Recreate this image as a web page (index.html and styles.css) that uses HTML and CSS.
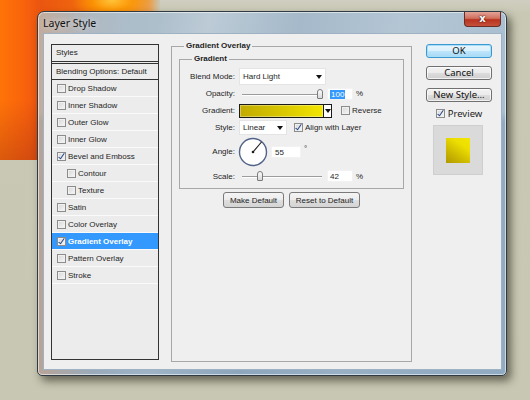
FILE: index.html
```html
<!DOCTYPE html>
<html>
<head>
	<meta charset="utf-8">
	<title>Layer Style</title>
	<link rel="stylesheet" href="styles.css">
</head>
<body>
	<div class="art"></div>

	<div class="window">
		<div class="titlebar">
			<span class="titlebar__text">Layer Style</span>
			<span class="titlebar__close">x</span>
		</div>

		<div class="client">
			<div class="styles">
				<div class="styles__head">Styles</div>
				<div class="styles__head styles__head--blend">Blending Options: Default</div>
				<div class="styles__item"><span class="cb"></span>Drop Shadow</div>
				<div class="styles__item"><span class="cb"></span>Inner Shadow</div>
				<div class="styles__item"><span class="cb"></span>Outer Glow</div>
				<div class="styles__item"><span class="cb"></span>Inner Glow</div>
				<div class="styles__item"><span class="cb cb--on"></span>Bevel and Emboss</div>
				<div class="styles__item styles__item--sub"><span class="cb"></span>Contour</div>
				<div class="styles__item styles__item--sub"><span class="cb"></span>Texture</div>
				<div class="styles__item"><span class="cb"></span>Satin</div>
				<div class="styles__item"><span class="cb"></span>Color Overlay</div>
				<div class="styles__item styles__item--active"><span class="cb cb--on"></span>Gradient Overlay</div>
				<div class="styles__item"><span class="cb"></span>Pattern Overlay</div>
				<div class="styles__item"><span class="cb"></span>Stroke</div>
			</div>

			<fieldset class="group">
				<legend>Gradient Overlay</legend>
				<fieldset class="group group--inner">
					<legend>Gradient</legend>

					<div class="row">
						<label class="row__label">Blend Mode:</label>
						<div class="select select--blend">Hard Light<span class="select__arrow"></span></div>
					</div>

					<div class="row">
						<label class="row__label">Opacity:</label>
						<div class="slider"><span class="slider__thumb" style="left: 75px"></span></div>
						<div class="field"><span class="field__sel">100</span></div>
						<span class="unit">%</span>
					</div>

					<div class="row">
						<label class="row__label">Gradient:</label>
						<div class="grad">
							<div class="grad__fill"></div>
							<div class="grad__arrow"><span class="select__arrow"></span></div>
						</div>
						<span class="cb cb--reverse"></span>
						<span class="check-text">Reverse</span>
					</div>

					<div class="row">
						<label class="row__label">Style:</label>
						<div class="select select--style">Linear<span class="select__arrow"></span></div>
						<span class="cb cb--on cb--align"></span>
						<span class="check-text">Align with Layer</span>
					</div>

					<div class="row row--angle">
						<label class="row__label">Angle:</label>
						<svg class="dial" width="30" height="30" viewBox="0 0 30 30">
							<circle cx="15" cy="15" r="13.5" fill="#fff" stroke="#52638a" stroke-width="1.4"/>
							<line x1="15" y1="15" x2="23.5" y2="5" stroke="#1c1c1c" stroke-width="1.1"/>
							<circle cx="15" cy="15" r="1.3" fill="#1c1c1c"/>
						</svg>
						<div class="field field--angle">55</div>
						<span class="unit unit--deg">°</span>
					</div>

					<div class="row row--scale">
						<label class="row__label">Scale:</label>
						<div class="slider"><span class="slider__thumb" style="left: 15px"></span></div>
						<div class="field">42</div>
						<span class="unit">%</span>
					</div>
				</fieldset>

				<div class="defaults">
					<button class="btn-small">Make Default</button>
					<button class="btn-small">Reset to Default</button>
				</div>
			</fieldset>

			<div class="actions">
				<button class="btn btn--default">OK</button>
				<button class="btn">Cancel</button>
				<button class="btn">New Style...</button>
				<div class="preview-check"><span class="cb cb--on"></span>Preview</div>
				<div class="preview">
					<div class="preview__swatch"></div>
				</div>
			</div>
		</div>
	</div>
</body>
</html>
```

FILE: styles.css
```css
body {
	margin: 0;
	width: 530px;
	height: 400px;
	overflow: hidden;
	position: relative;
	background: linear-gradient(180deg, #cfcec0 0, #c9c8b4 14px, #c8c7b3 100%);
	font-family: "Liberation Sans", Arial, sans-serif;
	font-size: 8px;
	color: #1e1e1e;
}

.art {
	position: absolute;
	left: 0;
	top: 0;
	width: 160px;
	height: 160px;
	background:
		radial-gradient(ellipse 40px 22px at 112px 0, #ffc53a 0, rgba(255, 160, 0, .7) 50%, rgba(255, 140, 0, 0) 100%),
		linear-gradient(180deg, rgba(0, 0, 0, 0) 100px, rgba(150, 40, 20, .35) 160px),
		linear-gradient(90deg, #ff7408 0, #f8620c 25px, #ea5510 40px, #f57a0a 120px, #e8a050 150px, #c8c7b3 160px);
}

/* window */

.window {
	position: absolute;
	left: 37px;
	top: 11px;
	width: 470px;
	height: 365px;
	box-sizing: border-box;
	display: flex;
	flex-direction: column;
	padding: 0 4px 5px 5px;
	border: 1px solid #2f3a44;
	border-radius: 7px 7px 5px 5px;
	background:
		linear-gradient(90deg, rgba(215, 160, 120, .55) 0, rgba(190, 170, 160, .2) 50px, rgba(170, 190, 205, 0) 90px),
		linear-gradient(180deg, rgba(0, 0, 0, 0) 100px, rgba(70, 110, 150, .25) 110px),
		linear-gradient(100deg, #a9b9c6 0, #aebfcc 120px, #bccbd6 170px, #a5b9ca 260px, #b4c6d4 360px, #a9bfd1 470px);
	box-shadow: inset 0 0 0 1px rgba(255, 255, 255, .55), 4px 5px 9px rgba(20, 20, 10, .55);
}

.titlebar {
	height: 21px;
	display: flex;
	align-items: center;
	position: relative;
}

.titlebar__text {
	font-family: "Noto Sans", sans-serif;
	font-size: 10.5px;
	color: #111;
	text-shadow: 0 0 6px rgba(255, 255, 255, .8);
}

.titlebar__close {
	position: absolute;
	right: 1px;
	top: 0;
	width: 37px;
	height: 15px;
	box-sizing: border-box;
	border: 1px solid #6a2c24;
	border-top: none;
	border-radius: 0 0 4px 4px;
	background: linear-gradient(180deg, #e3a397 0, #d0705f 45%, #b9331f 55%, #c5503a 100%);
	color: #fff;
	font-family: "DejaVu Sans", sans-serif;
	font-weight: bold;
	font-size: 10px;
	line-height: 13px;
	text-align: center;
	text-shadow: 0 0 2px #5a1a10, 0 0 1px #5a1a10;
}

.client {
	flex: 1;
	display: flex;
	align-items: flex-start;
	box-sizing: border-box;
	padding: 7px 0 0 7px;
	background: #efefef;
	border: 1px solid #9fb2c3;
}

/* styles list */

.styles {
	width: 108px;
	height: 316px;
	box-sizing: border-box;
	margin-top: 3px;
	border: 1px solid #333;
	background: #ececec;
}

.styles__head {
	height: 16px;
	line-height: 16px;
	padding-left: 4px;
	border-bottom: 1px solid #333;
}

.styles__head--blend {
	height: 15px;
	line-height: 15px;
	margin-top: 1px;
	border-top: 1px solid #333;
}

.styles__item {
	height: 16px;
	display: flex;
	align-items: center;
	gap: 2px;
	padding-left: 5px;
	border-bottom: 1px solid #fafafa;
}

.styles__item--sub {
	padding-left: 15px;
}

.styles__item--active {
	background: #3399ff;
	color: #fff;
	font-weight: bold;
}

.cb {
	flex: none;
	width: 9px;
	height: 9px;
	box-sizing: border-box;
	position: relative;
	border: 1px solid #8c8c8c;
	background: linear-gradient(135deg, #d6d6d6, #f7f7f7);
	box-shadow: inset 0 0 0 1px #f0f0f0;
}

.cb--on::after {
	content: "";
	position: absolute;
	left: 2px;
	top: -1px;
	width: 2px;
	height: 6px;
	border: solid #24468a;
	border-width: 0 1.5px 1.5px 0;
	transform: rotate(35deg);
}

/* middle panel */

.group {
	margin: 0 0 0 12px;
	padding: 0 7px;
	min-width: 0;
	width: 241px;
	height: 321px;
	box-sizing: border-box;
	border: 1px solid #a8a8a8;
}

.group legend {
	font-weight: bold;
	line-height: 10px;
	padding: 0 2px;
	margin-left: 5px;
}

.group--inner {
	margin: 2px 0 0;
	padding: 3px 0 3px;
	width: auto;
	height: auto;
}

.group--inner legend {
	line-height: 12px;
	margin-left: 12px;
}

.row {
	height: 17px;
	display: flex;
	align-items: center;
}

.row--angle {
	height: 31px;
}

.row--scale {
	height: 18px;
}

.row__label {
	width: 55px;
	margin-right: 4px;
	text-align: right;
	flex: none;
}

.select {
	height: 17px;
	box-sizing: border-box;
	display: flex;
	align-items: center;
	justify-content: space-between;
	padding: 0 3px;
	background: #fff;
	border: 1px solid #e4e4e4;
}

.select--blend {
	width: 87px;
}

.select--style {
	width: 48px;
	height: 15px;
}

.select__arrow {
	width: 0;
	height: 0;
	border-left: 3px solid transparent;
	border-right: 3px solid transparent;
	border-top: 4px solid #111;
}

.slider {
	position: relative;
	width: 80px;
	height: 12px;
	margin-left: 3px;
}

.slider::before {
	content: "";
	position: absolute;
	left: 0;
	right: 0;
	top: 6px;
	height: 1px;
	background: #9c9c9c;
	border-bottom: 1px solid #fff;
}

.slider__thumb {
	position: absolute;
	top: 1px;
	width: 6px;
	height: 10px;
	box-sizing: border-box;
	border: 1px solid #7b7b7b;
	border-radius: 3px 3px 1px 1px;
	background: linear-gradient(180deg, #fdfdfd, #d8d8d8);
}

.field {
	width: 26px;
	height: 12px;
	line-height: 12px;
	box-sizing: border-box;
	margin-left: 5px;
	padding-left: 2px;
	background: #fff;
	border: 1px solid #f2f2f2;
}

.field__sel {
	background: #3399ff;
	color: #fff;
	padding: 0 1px;
}

.field--angle {
	width: 30px;
	margin-left: 3px;
	padding-left: 3px;
}

.unit {
	margin-left: 3px;
}

.unit--deg {
	align-self: flex-start;
	margin-top: 8px;
}

.dial {
	display: block;
	margin-left: -1px;
}

.grad {
	display: flex;
	height: 14px;
	box-sizing: border-box;
	border: 1px solid #1a1a1a;
}

.grad__fill {
	width: 83px;
	background: linear-gradient(90deg, #c2ab00, #d6c300 45%, #f3e600);
	box-shadow: inset 0 0 0 1px rgba(255, 255, 255, .35);
}

.grad__arrow {
	width: 7px;
	display: flex;
	align-items: center;
	justify-content: center;
	background: #fff;
	border-left: 1px solid #1a1a1a;
}

.cb--reverse {
	margin-left: 9px;
}

.cb--align {
	margin-left: 7px;
}

.check-text {
	margin-left: 2px;
}

.defaults {
	display: flex;
	justify-content: center;
	gap: 5px;
	margin-top: 3px;
}

.btn-small {
	height: 16px;
	padding: 0;
	white-space: nowrap;
	font-family: inherit;
	font-size: 8px;
	color: #1e1e1e;
	border: 1px solid #7a7a7a;
	border-radius: 3px;
	background: linear-gradient(180deg, #f4f4f4 0, #ececec 50%, #dedede 50%, #d4d4d4 100%);
}

.btn-small:first-child {
	width: 61px;
}

.btn-small:last-child {
	width: 71px;
}

/* right column */

.actions {
	width: 66px;
	margin: 3px 0 0 14px;
	display: flex;
	flex-direction: column;
	align-items: stretch;
	font-family: "Noto Sans", sans-serif;
	font-size: 9.5px;
}

.btn {
	height: 14px;
	margin-bottom: 8px;
	padding: 0;
	font-family: inherit;
	font-size: inherit;
	line-height: 12px;
	color: #111;
	border: 1px solid #707070;
	border-radius: 3px;
	background: linear-gradient(180deg, #f2f2f2 0, #ebebeb 50%, #dddddd 50%, #cfcfcf 100%);
	box-shadow: inset 0 0 0 1px rgba(255, 255, 255, .7);
}

.btn--default {
	border-color: #3c98d0;
	box-shadow: inset 0 0 0 1px #a9def8;
	background: linear-gradient(180deg, #eaf6fd 0, #d9f0fc 50%, #bee6fd 50%, #a7d9f5 100%);
}

.preview-check {
	display: flex;
	align-items: center;
	justify-content: center;
	gap: 3px;
	height: 11px;
	margin-top: -2px;
}

.preview {
	width: 50px;
	height: 50px;
	box-sizing: border-box;
	margin: 6px 0 0 7px;
	display: flex;
	align-items: center;
	justify-content: center;
	background: #dadada;
	border: 1px solid #cfcfcf;
}

.preview__swatch {
	width: 24px;
	height: 25px;
	background: linear-gradient(35deg, #b09900 0, #d2bf00 40%, #eddf00 70%, #f2e600 100%);
}
```
